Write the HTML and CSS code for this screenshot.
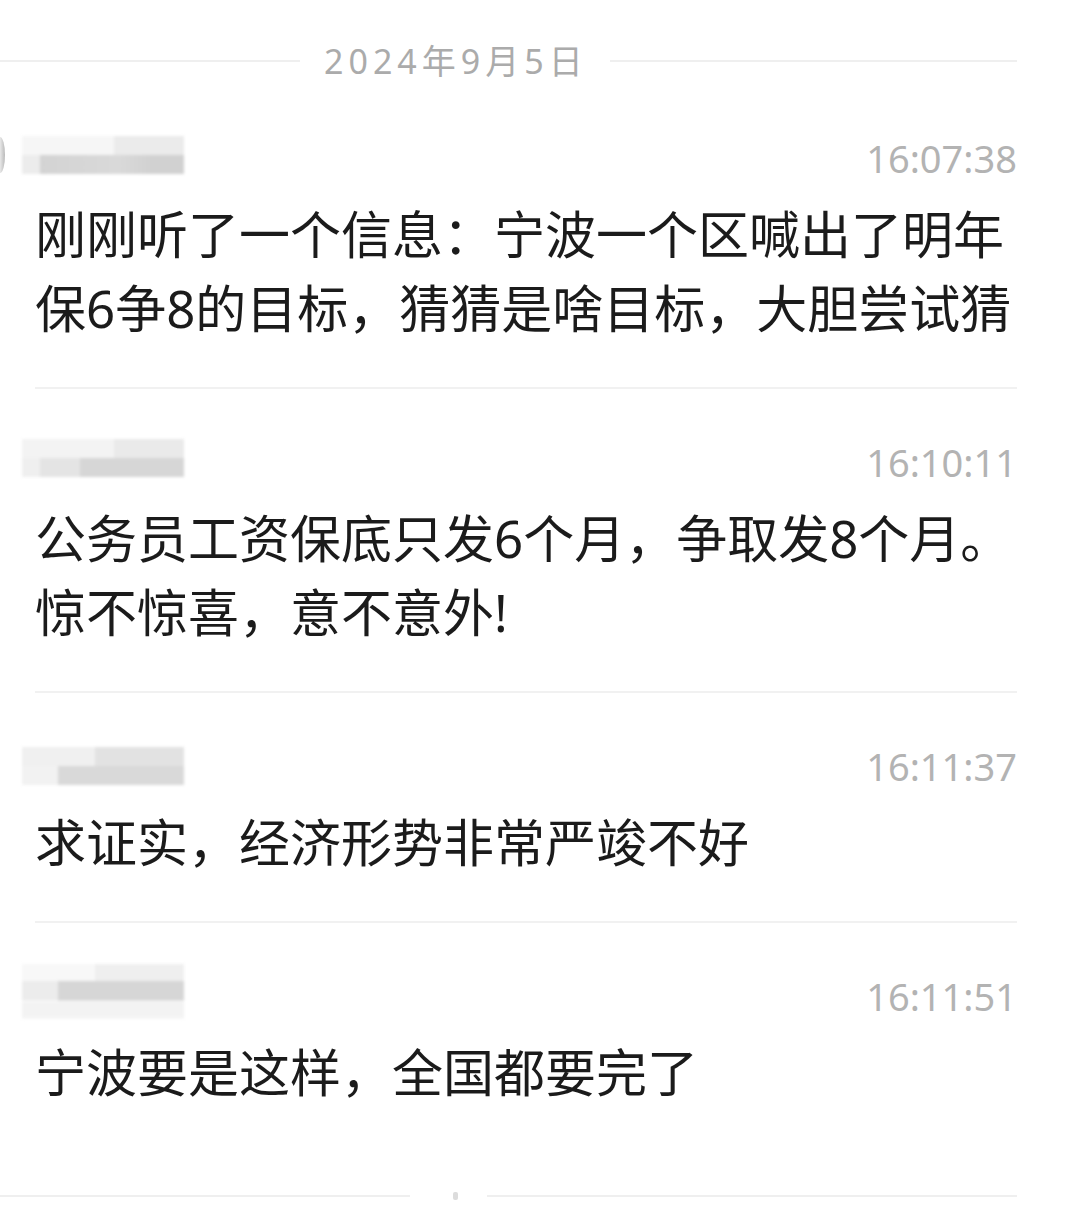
FILE: index.html
```html
<!DOCTYPE html>
<html>
<head>
<meta charset="utf-8">
<meta name="viewport" content="width=device-width, initial-scale=1">
<link rel="stylesheet" href="styles.css">
</head>
<body>
<div class="chat">
  <div class="day">
    <span class="day-line day-line-left"></span>
    <span class="day-text">2024年9月5日</span>
    <span class="day-line"></span>
  </div>

  <div class="list">
    <div class="item">
      <div class="head">
        <span class="avatar-edge"></span>
        <span class="name blur-a"></span>
        <span class="time">16:07:38</span>
      </div>
      <div class="msg">刚刚听了一个信息：宁波一个区喊出了明年保6争8的目标，猜猜是啥目标，大胆尝试猜</div>
    </div>

    <div class="item">
      <div class="head">
        <span class="name blur-b"></span>
        <span class="time">16:10:11</span>
      </div>
      <div class="msg">公务员工资保底只发6个月，争取发8个月。惊不惊喜，意不意外!</div>
    </div>

    <div class="item">
      <div class="head">
        <span class="name blur-c"></span>
        <span class="time">16:11:37</span>
      </div>
      <div class="msg">求证实，经济形势非常严竣不好</div>
    </div>

    <div class="item">
      <div class="head">
        <span class="name blur-d"></span>
        <span class="time">16:11:51</span>
      </div>
      <div class="msg">宁波要是这样，全国都要完了</div>
    </div>
  </div>

  <div class="day day-end">
    <span class="day-line day-line-end"></span>
    <span class="day-mark"></span>
    <span class="day-line"></span>
  </div>
</div>
</body>
</html>
```

FILE: styles.css
```css
* {box-sizing: border-box;}

body {
  margin: 0;
  background: #ffffff;
  font-family: "Noto Sans", "Noto Sans CJK SC", sans-serif;
}

.chat {
  padding: 37px 48px 0 0;
}

/* date divider */
.day {
  display: flex;
  align-items: center;
  height: 48px;
}

.day-line {
  flex: 1;
  height: 2px;
  background: #efefef;
}

.day-line-left {
  flex: 0 0 300px;
}

.day-text {
  margin: 0 22px 0 24px;
  font-size: 34px;
  letter-spacing: 5px;
  color: #ababab;
  line-height: 1;
}

.day-end {
  margin-top: 19px;
}

.day-line-end {
  flex: 0 0 410px;
}

.day-mark {
  width: 5px;
  height: 8px;
  margin: 0 29px 0 43px;
  border-radius: 2px;
  background: #dcdcdc;
}

/* messages */
.list {
  padding-left: 35px;
}

.item {
  padding: 53px 0 42px;
  border-bottom: 2px solid #f1f1f1;
}

.item:last-child {
  border-bottom: none;
}

.head {
  display: flex;
  align-items: center;
  height: 40px;
  margin-bottom: 19px;
}

.avatar-edge {
  width: 5px;
  height: 36px;
  margin: -6px 17px 0 -35px;
  border-radius: 0 5px 5px 0 / 0 18px 18px 0;
  background: linear-gradient(90deg, #e8e8e8, #b9b9b9);
}

.name {
  width: 162px;
  height: 38px;
  margin-left: -13px;
  filter: blur(1.5px);
}

.avatar-edge + .name {
  margin-left: 0;
}

.blur-a {
  margin-top: -6px;
  background:
    linear-gradient(90deg, #ececec 11%, #d3d3d3 11%, #d9d9d9 60%, #d1d1d1 80%) left bottom / 100% 50% no-repeat,
    linear-gradient(90deg, #f6f6f6 57%, #ebebeb 57%) left top / 100% 50% no-repeat;
}

.blur-b {
  margin-top: -8px;
  background:
    linear-gradient(90deg, #efefef 11%, #e4e4e4 11%, #e4e4e4 36%, #d6d6d6 36%) left bottom / 100% 50% no-repeat,
    linear-gradient(90deg, #f3f3f3 57%, #eaeaea 57%) left top / 100% 50% no-repeat;
}

.blur-c {
  background:
    linear-gradient(90deg, #f2f2f2 22%, #d9d9d9 22%) left bottom / 100% 50% no-repeat,
    linear-gradient(90deg, #f0f0f0 45%, #e2e2e2 45%) left top / 100% 50% no-repeat;
}

.blur-d {
  height: 55px;
  margin-top: -10px;
  background:
    linear-gradient(#f3f3f3, #f3f3f3) left bottom / 100% 30% no-repeat,
    linear-gradient(90deg, #ececec 22%, #d6d6d6 22%) left 50% / 100% 36% no-repeat,
    linear-gradient(90deg, #f8f8f8 45%, #efefef 45%) left top / 100% 34% no-repeat;
}

.time {
  margin-left: auto;
  font-size: 38px;
  line-height: 1;
  color: #b3b3b3;
}

.msg {
  font-size: 51px;
  line-height: 74px;
  color: #1b1b1b;
}

.item:last-child .msg {
  line-height: 74px;
}

.item:last-child {
  padding-bottom: 44px;
}
```
